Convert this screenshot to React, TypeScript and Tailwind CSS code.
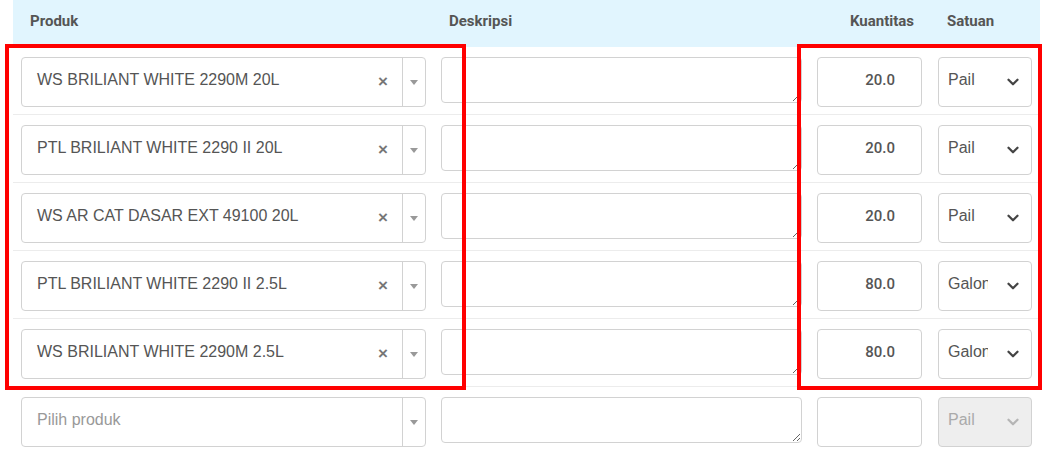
import React from 'react';
import { ChevronDown } from 'lucide-react';

interface LineItem {
  product: string;
  qty: string;
  unit: string;
}

const items: LineItem[] = [
  { product: 'WS BRILIANT WHITE 2290M 20L', qty: '20.0', unit: 'Pail' },
  { product: 'PTL BRILIANT WHITE 2290 II 20L', qty: '20.0', unit: 'Pail' },
  { product: 'WS AR CAT DASAR EXT 49100 20L', qty: '20.0', unit: 'Pail' },
  { product: 'PTL BRILIANT WHITE 2290 II 2.5L', qty: '80.0', unit: 'Galon' },
  { product: 'WS BRILIANT WHITE 2290M 2.5L', qty: '80.0', unit: 'Galon' },
];

const cols = 'grid grid-cols-[421px_376px_120px_110px]';

const ProductSelect: React.FC<{ value?: string }> = ({ value }) => (
  <div className="flex h-[50px] w-full items-stretch rounded-[4px] border border-[#d2d2d2] bg-white">
    <div className={`flex flex-1 items-center pl-[15px] pb-[5px] text-[16px] ${value ? 'text-[#555]' : 'text-[#999]'}`}>
      {value ?? 'Pilih produk'}
    </div>
    {value && (
      <div className="flex w-[30px] items-center justify-center pr-[8px] text-[17px] font-bold text-[#777]">×</div>
    )}
    <div className="flex w-[23px] items-center justify-center border-l border-[#d2d2d2]">
      <svg width="8" height="5" viewBox="0 0 8 5">
        <path d="M0 0h8L4 5z" fill="#999" />
      </svg>
    </div>
  </div>
);

const UnitSelect: React.FC<{ value: string; disabled?: boolean }> = ({ value, disabled }) => (
  <div
    className={`flex h-[50px] w-full items-center rounded-[4px] border border-[#d2d2d2] pl-[9px] pr-[9px] ${
      disabled ? 'bg-[#eeeeee] text-[#aaa]' : 'bg-white text-[#555]'
    }`}
  >
    <span className="w-[40px] overflow-hidden whitespace-nowrap pb-[4px] text-[16px]">{value}</span>
    <span className="flex-1" />
    <ChevronDown size={18} strokeWidth={3} color={disabled ? '#b5b5b5' : '#444'} />
  </div>
);

const Row: React.FC<{ item?: LineItem }> = ({ item }) => (
  <div className={`${cols} border-b border-[#ececec] pt-[10px] pb-[7px]`}>
    <div className="pl-2 pr-2">
      <ProductSelect value={item?.product} />
    </div>
    <div className="pl-[7px] pr-2">
      <textarea
        readOnly
        className="block h-[46px] w-full resize-y rounded-[4px] border border-[#d2d2d2] bg-white outline-none"
      />
    </div>
    <div className="pl-[7px] pr-2">
      <div className="flex h-[50px] items-center justify-end rounded-[4px] border border-[#d2d2d2] bg-white pr-[26px] pb-[4px] font-['Roboto',sans-serif] text-[15px] font-medium text-[#555]">
        {item?.qty}
      </div>
    </div>
    <div className="pl-2 pr-2">
      <UnitSelect value={item?.unit ?? 'Pail'} disabled={!item} />
    </div>
  </div>
);

export default function App() {
  return (
    <div className="relative h-[450px] w-[1048px] overflow-hidden bg-white font-['Liberation_Sans',Arial,sans-serif]">
      <div className="ml-[13px] w-[1027px]">
        <div className={`${cols} h-[47px] items-center bg-[#e1f5fe] pb-[4px] font-['Roboto',sans-serif] text-[15px] font-bold text-[#555]`}>
          <div className="pl-[17px]">Produk</div>
          <div className="pl-[15px]">Deskripsi</div>
          <div className="pr-[16px] text-right">Kuantitas</div>
          <div className="pl-[17px]">Satuan</div>
        </div>
        {items.map((it) => (
          <Row key={it.product} item={it} />
        ))}
        <Row />
      </div>

      {/* highlight frames */}
      <div className="pointer-events-none absolute left-[5px] top-[44px] h-[346px] w-[461px] border-4 border-[#f00]" />
      <div className="pointer-events-none absolute left-[797px] top-[44px] h-[346px] w-[245px] border-4 border-[#f00]" />
    </div>
  );
}
